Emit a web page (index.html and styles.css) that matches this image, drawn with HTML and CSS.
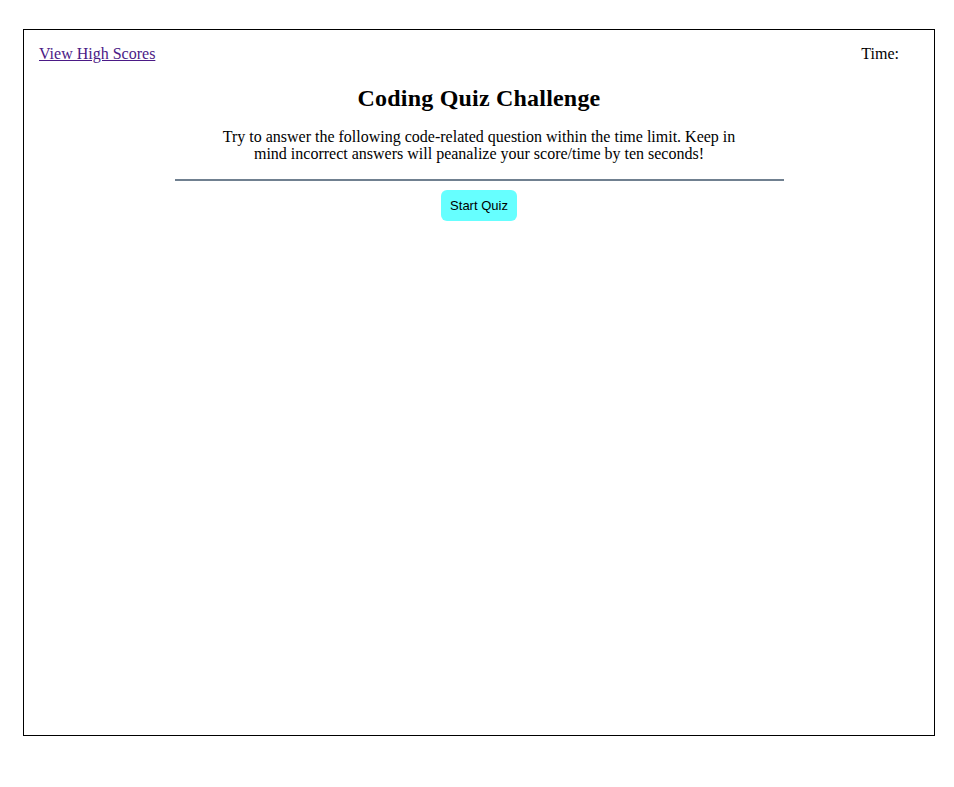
FILE: index.html
```html
<!DOCTYPE html>
<html>
<head>
<meta charset="utf-8">
<title>Coding Quiz</title>
<link rel="stylesheet" href="styles.css">
</head>
<body>
<div class="frame">
  <header class="topbar">
    <a class="scores" href="#">View High Scores</a>
    <span class="timer">Time:</span>
  </header>
  <main class="intro">
    <h1 class="title">Coding Quiz Challenge</h1>
    <p class="desc">Try to answer the following code-related question within the time limit. Keep in mind incorrect answers will peanalize your score/time by ten seconds!</p>
    <div class="rule"></div>
    <button class="start">Start Quiz</button>
  </main>
</div>
</body>
</html>
```
FILE: styles.css
```css
html, body {
  margin: 0;
  padding: 0;
  background: #fff;
}
body {
  padding: 29px 19px 0 23px;
  font-family: "Liberation Serif", "Times New Roman", serif;
  font-size: 16px;
  color: #000;
}
.frame {
  box-sizing: border-box;
  width: 912px;
  height: 707px;
  border: 1px solid #000;
}
.topbar {
  display: flex;
  justify-content: space-between;
  padding: 15px 35px 0 15px;
  line-height: 18px;
}
.scores {
  color: #4b1a86;
  text-decoration: underline;
}
.timer {
  color: #000;
}
.intro {
  display: flex;
  flex-direction: column;
  align-items: center;
}
.title {
  margin: 21px 0 0;
  font-size: 24px;
  font-weight: bold;
  line-height: 28px;
  letter-spacing: 0.2px;
}
.desc {
  margin: 16px 0 0;
  width: 540px;
  text-align: center;
  line-height: 17px;
}
.rule {
  width: 609px;
  height: 2px;
  margin-top: 17px;
  background: #708090;
}
.start {
  margin-top: 9px;
  width: 76px;
  height: 31px;
  padding: 0;
  border: none;
  border-radius: 6px;
  background: #66ffff;
  font-family: "Liberation Sans", Arial, sans-serif;
  font-size: 13px;
  color: #000;
}
```
